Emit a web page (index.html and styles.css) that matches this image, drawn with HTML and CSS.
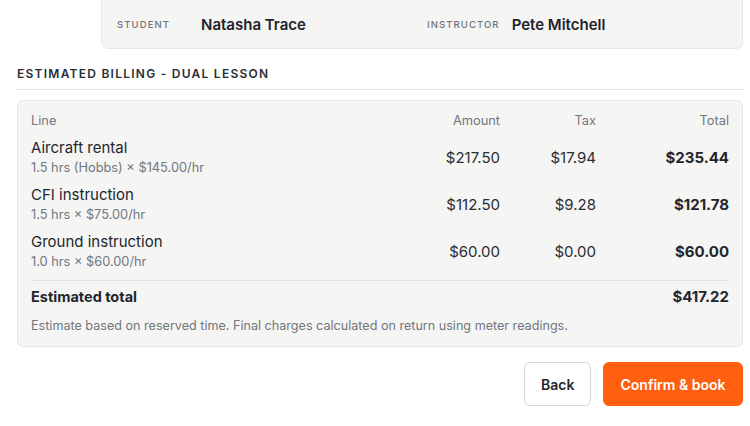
FILE: index.html
```html
<!DOCTYPE html>
<html lang="en">
<head>
<meta charset="utf-8">
<title>Estimated billing</title>
<link rel="stylesheet" href="styles.css">
</head>
<body>
<div class="page">
  <div class="people">
    <div class="person">
      <span class="person-label">Student</span>
      <span class="person-name">Natasha Trace</span>
    </div>
    <div class="person">
      <span class="person-label">Instructor</span>
      <span class="person-name">Pete Mitchell</span>
    </div>
  </div>

  <h2 class="section-title">Estimated billing - Dual lesson</h2>

  <div class="billing">
    <div class="grid">
      <div class="th">Line</div>
      <div class="th num">Amount</div>
      <div class="th num">Tax</div>
      <div class="th num">Total</div>

      <div class="line"><div class="line-name">Aircraft rental</div><div class="line-sub">1.5 hrs (Hobbs) × $145.00/hr</div></div>
      <div class="num cell">$217.50</div>
      <div class="num cell">$17.94</div>
      <div class="num cell strong">$235.44</div>

      <div class="line"><div class="line-name">CFI instruction</div><div class="line-sub">1.5 hrs × $75.00/hr</div></div>
      <div class="num cell">$112.50</div>
      <div class="num cell">$9.28</div>
      <div class="num cell strong">$121.78</div>

      <div class="line"><div class="line-name">Ground instruction</div><div class="line-sub">1.0 hrs × $60.00/hr</div></div>
      <div class="num cell">$60.00</div>
      <div class="num cell">$0.00</div>
      <div class="num cell strong">$60.00</div>
    </div>
    <div class="total-row">
      <span class="total-label">Estimated total</span>
      <span class="total-value">$417.22</span>
    </div>
    <p class="note">Estimate based on reserved time. Final charges calculated on return using meter readings.</p>
  </div>

  <div class="actions">
    <button class="btn btn-secondary">Back</button>
    <button class="btn btn-primary">Confirm &amp; book</button>
  </div>
</div>
</body>
</html>
```

FILE: styles.css
```css
* { box-sizing: border-box; }
html, body { margin: 0; padding: 0; background: #ffffff; }
body {
  font-family: Inter, "Noto Sans", "Liberation Sans", sans-serif;
  color: #23262c;
}
.page {
  padding: 0 7px 0 17px;
}
.people {
  margin: -1px 0 0 84px;
  height: 50px;
  background: #f5f5f4;
  border: 1px solid #e6e6e4;
  border-radius: 0 0 7px 7px;
  display: grid;
  grid-template-columns: 1fr 1fr;
  column-gap: 10px;
  padding: 0 15px;
  align-items: center;
}
.person {
  display: flex;
  align-items: center;
  gap: 12px;
}
.person-label {
  min-width: 72px;
  font-size: 9.5px;
  letter-spacing: 1.1px;
  text-transform: uppercase;
  color: #6e727a;
  font-weight: 500;
}
.person-name {
  font-size: 15px;
  font-weight: 600;
  color: #1f2329;
}
.section-title {
  margin: 16px 0 0;
  padding-bottom: 7px;
  border-bottom: 1px solid #e5e5e3;
  font-size: 12px;
  font-weight: 600;
  letter-spacing: 1.25px;
  text-transform: uppercase;
  color: #2a2d33;
  line-height: 17px;
}
.billing {
  margin-top: 10px;
  background: #f5f5f4;
  border: 1px solid #e6e6e4;
  border-radius: 6px;
  padding: 12px 13px 12px 13px;
}
.grid {
  display: grid;
  grid-template-columns: 1fr 100px 96px 133px;
  row-gap: 9px;
  align-items: center;
}
.th {
  font-size: 12.8px;
  line-height: 15px;
  padding-bottom: 1px;
  color: #71757d;
}
.num { text-align: right; }
.cell {
  font-size: 15px;
  color: #2a2d33;
}
.strong { font-weight: 700; color: #23262c; }
.line-name {
  font-size: 15px;
  line-height: 20px;
  color: #23262c;
}
.line-sub {
  margin-top: 2px;
  font-size: 12.8px;
  line-height: 16px;
  color: #71757d;
}
.total-row {
  margin-top: 10px;
  border-top: 1px solid #e2e2e0;
  padding-top: 6px;
  display: flex;
  justify-content: space-between;
  align-items: center;
  line-height: 20px;
}
.total-label {
  font-size: 14.5px;
  font-weight: 700;
  color: #23262c;
}
.total-value {
  font-size: 15px;
  font-weight: 700;
  color: #23262c;
}
.note {
  margin: 11px 0 0;
  font-size: 12.6px;
  line-height: 16px;
  color: #71757d;
}
.actions {
  margin-top: 15px;
  display: flex;
  justify-content: flex-end;
  gap: 12px;
}
.btn {
  height: 44px;
  border-radius: 6px;
  font-family: inherit;
  font-size: 14px;
  font-weight: 600;
  padding: 0 16px;
  cursor: pointer;
}
.btn-secondary {
  background: #ffffff;
  border: 1px solid #d6d6d4;
  color: #23262c;
  width: 67px;
}
.btn-primary {
  background: #ff5f0f;
  border: 1px solid #ff5f0f;
  color: #ffffff;
  width: 140px;
}
```
